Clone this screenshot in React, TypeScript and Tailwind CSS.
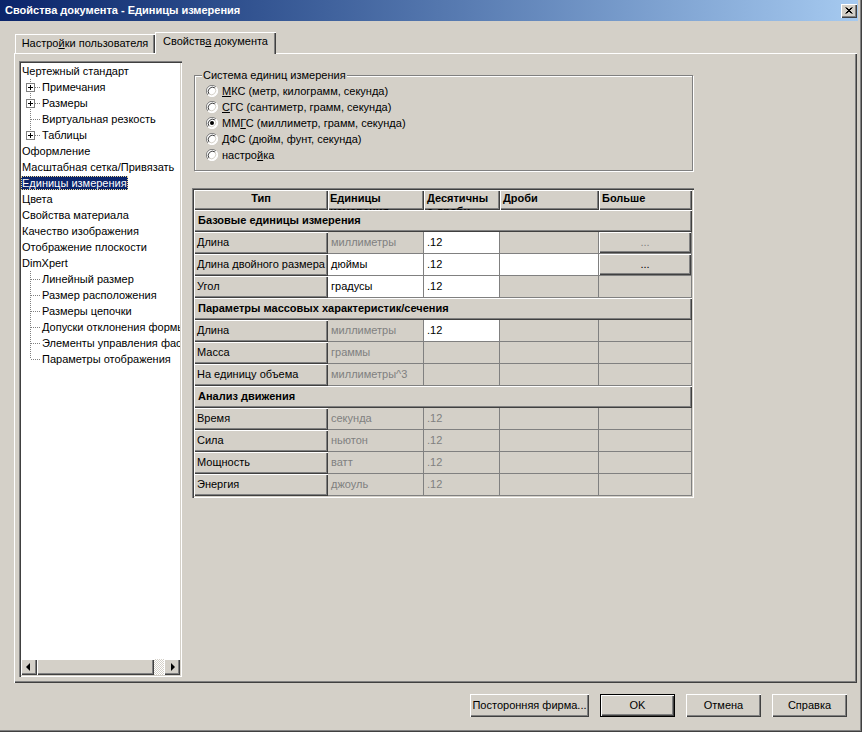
import React from "react";

const raised =
  "bg-[#d4d0c8] shadow-[inset_1px_1px_#ffffff,inset_-1px_-1px_#404040,inset_-2px_-2px_#808080]";
const sunken =
  "shadow-[inset_1px_1px_#808080,inset_2px_2px_#404040,inset_-1px_-1px_#ffffff,inset_-2px_-2px_#d4d0c8]";

type TreeNode = { label: string; level: 0 | 1; box?: boolean; last?: boolean; selected?: boolean };

const tree: TreeNode[] = [
  { label: "Чертежный стандарт", level: 0 },
  { label: "Примечания", level: 1, box: true },
  { label: "Размеры", level: 1, box: true },
  { label: "Виртуальная резкость", level: 1 },
  { label: "Таблицы", level: 1, box: true, last: true },
  { label: "Оформление", level: 0 },
  { label: "Масштабная сетка/Привязать", level: 0 },
  { label: "Единицы измерения", level: 0, selected: true },
  { label: "Цвета", level: 0 },
  { label: "Свойства материала", level: 0 },
  { label: "Качество изображения", level: 0 },
  { label: "Отображение плоскости", level: 0 },
  { label: "DimXpert", level: 0 },
  { label: "Линейный размер", level: 1 },
  { label: "Размер расположения", level: 1 },
  { label: "Размеры цепочки", level: 1 },
  { label: "Допуски отклонения формы", level: 1 },
  { label: "Элементы управления фасками", level: 1 },
  { label: "Параметры отображения", level: 1, last: true },
];

function Conn({ box, last }: { box?: boolean; last?: boolean }) {
  return (
    <svg width="20" height="16" className="shrink-0">
      <line x1="8.5" y1="0" x2="8.5" y2={last ? 8 : 16} stroke="#808080" strokeDasharray="1 1" />
      <line x1={box ? 13 : 9} y1="8.5" x2="19" y2="8.5" stroke="#808080" strokeDasharray="1 1" />
      {box && (
        <>
          <rect x="4.5" y="4.5" width="8" height="8" fill="#ffffff" stroke="#808080" />
          <line x1="6" y1="8.5" x2="11" y2="8.5" stroke="#000000" />
          <line x1="8.5" y1="6" x2="8.5" y2="11" stroke="#000000" />
        </>
      )}
    </svg>
  );
}

function Tree() {
  return (
    <div className={`w-[163px] h-[616px] shrink-0 flex flex-col bg-white p-[2px] ${sunken}`}>
      <div className="flex-1 overflow-hidden">
        {tree.map((n, i) => (
          <div key={i} className="flex h-[16px] items-center whitespace-nowrap">
            {n.level === 1 ? (
              <>
                <span className="w-[1px] shrink-0" />
                <Conn box={n.box} last={n.last} />
                <span>{n.label}</span>
              </>
            ) : n.selected ? (
              <span className="h-[14px] leading-[12px] bg-[#0a246a] text-white border border-dotted border-[#f5db95]">
                {n.label}
              </span>
            ) : (
              <span className="pl-[1px]">{n.label}</span>
            )}
          </div>
        ))}
      </div>
      <div className="flex h-[16px] shrink-0">
        <div className={`w-[16px] h-[16px] flex items-center justify-center ${raised}`}>
          <svg width="16" height="16">
            <polygon points="5,8 9,4 9,12" fill="#000000" />
          </svg>
        </div>
        <div className="flex-1 flex bg-[image:repeating-conic-gradient(#ffffff_0_25%,#d4d0c8_0_50%)] bg-[length:2px_2px]">
          <div className={`w-[117px] h-[16px] ${raised}`} />
        </div>
        <div className={`w-[16px] h-[16px] flex items-center justify-center ${raised}`}>
          <svg width="16" height="16">
            <polygon points="7,4 11,8 7,12" fill="#000000" />
          </svg>
        </div>
      </div>
    </div>
  );
}

function Radio({ checked, children }: { checked?: boolean; children: React.ReactNode }) {
  return (
    <div className="flex h-[16px] items-center">
      <svg width="12" height="12" className="shrink-0">
        <circle cx="6" cy="6" r="5.5" fill="#ffffff" stroke="none" />
        <path d="M2 10 A5.5 5.5 0 0 1 10 2" fill="none" stroke="#808080" strokeWidth="1" />
        <path d="M3 9 A4.3 4.3 0 0 1 9 3" fill="none" stroke="#404040" strokeWidth="1" />
        <path d="M10 2 A5.5 5.5 0 0 1 2 10" fill="none" stroke="#ffffff" strokeWidth="1" />
        <path d="M9 3 A4.3 4.3 0 0 1 3 9" fill="none" stroke="#d4d0c8" strokeWidth="1" />
        {checked && <circle cx="6" cy="6" r="2" fill="#000000" />}
      </svg>
      <span className="ml-[4px] whitespace-nowrap">{children}</span>
    </div>
  );
}

type Cell = { text?: string; white?: boolean; dim?: boolean; button?: "on" | "off" };
type Row = { section: string } | { label: string; cells: Cell[] };

const rows: Row[] = [
  { section: "Базовые единицы измерения" },
  {
    label: "Длина",
    cells: [{ text: "миллиметры", dim: true }, { text: ".12", white: true }, {}, { button: "off" }],
  },
  {
    label: "Длина двойного размера",
    cells: [{ text: "дюймы", white: true }, { text: ".12", white: true }, { white: true }, { button: "on" }],
  },
  { label: "Угол", cells: [{ text: "градусы", white: true }, { text: ".12", white: true }, {}, {}] },
  { section: "Параметры массовых характеристик/сечения" },
  { label: "Длина", cells: [{ text: "миллиметры", dim: true }, { text: ".12", white: true }, {}, {}] },
  { label: "Масса", cells: [{ text: "граммы", dim: true }, {}, {}, {}] },
  { label: "На единицу объема", cells: [{ text: "миллиметры^3", dim: true }, {}, {}, {}] },
  { section: "Анализ движения" },
  { label: "Время", cells: [{ text: "секунда", dim: true }, { text: ".12", dim: true }, {}, {}] },
  { label: "Сила", cells: [{ text: "ньютон", dim: true }, { text: ".12", dim: true }, {}, {}] },
  { label: "Мощность", cells: [{ text: "ватт", dim: true }, { text: ".12", dim: true }, {}, {}] },
  { label: "Энергия", cells: [{ text: "джоуль", dim: true }, { text: ".12", dim: true }, {}, {}] },
];

function DataCell({ c }: { c: Cell }) {
  if (c.button) {
    return (
      <div className="h-[22px] border-r border-b border-[#808080]">
        <div
          className={`h-[21px] w-full flex items-center justify-center ${raised} ${
            c.button === "off" ? "text-[#808080]" : "text-black"
          }`}
        >
          ...
        </div>
      </div>
    );
  }
  return (
    <div
      className={`h-[22px] flex items-center pl-[3px] pb-[1px] border-r border-b border-[#808080] whitespace-nowrap overflow-hidden ${
        c.white ? "bg-white" : "bg-[#d4d0c8]"
      } ${c.dim ? "text-[#808080]" : "text-black"}`}
    >
      {c.text}
    </div>
  );
}

function UnitsTable() {
  return (
    <div className={`w-[502px] p-[2px] ${sunken}`}>
      <div className="grid grid-cols-[134px_96px_76px_99px_93px]">
        <div className={`h-[20px] pt-[2px] font-bold text-center overflow-hidden ${raised}`}>Тип</div>
        <div className={`h-[20px] pt-[2px] pl-[2px] font-bold overflow-hidden ${raised}`}>
          Единицы
          <br />
          измерения
        </div>
        <div className={`h-[20px] pt-[2px] pl-[3px] font-bold overflow-hidden ${raised}`}>
          Десятичны
          <br />е дроби
        </div>
        <div className={`h-[20px] pt-[2px] pl-[3px] font-bold overflow-hidden ${raised}`}>Дроби</div>
        <div className={`h-[20px] pt-[2px] pl-[3px] font-bold overflow-hidden ${raised}`}>Больше</div>
        {rows.map((r, i) =>
          "section" in r ? (
            <div key={i} className={`col-span-5 h-[22px] flex items-center pl-[4px] pb-[1px] font-bold ${raised}`}>
              {r.section}
            </div>
          ) : (
            <React.Fragment key={i}>
              <div className={`h-[22px] flex items-center pl-[3px] pb-[1px] whitespace-nowrap ${raised}`}>
                {r.label}
              </div>
              {r.cells.map((c, j) => (
                <DataCell key={j} c={c} />
              ))}
            </React.Fragment>
          )
        )}
      </div>
    </div>
  );
}

function Btn({ children, w, def }: { children: React.ReactNode; w: string; def?: boolean }) {
  return (
    <div
      className={`${w} h-[23px] flex items-center justify-center bg-[#d4d0c8] ${
        def
          ? "shadow-[inset_0_0_0_1px_#000000,inset_2px_2px_#ffffff,inset_-2px_-2px_#404040,inset_-3px_-3px_#808080]"
          : "shadow-[inset_1px_1px_#ffffff,inset_-1px_-1px_#404040,inset_-2px_-2px_#808080]"
      }`}
    >
      {children}
    </div>
  );
}

export default function App() {
  return (
    <div className="w-[862px] h-[732px] flex flex-col bg-[#d4d0c8] pr-[4px] text-[11px] leading-[13px] text-black font-['Liberation_Sans',Arial,sans-serif] shadow-[inset_-1px_-1px_#404040,inset_-2px_-2px_#808080]">
      {/* title bar */}
      <div className="h-[21px] shrink-0 flex items-center justify-between pl-[5px] pr-[1px] bg-gradient-to-r from-[#0a246a] to-[#a6caf0]">
        <span className="text-white font-bold text-[11px]">Свойства документа - Единицы измерения</span>
        <div className={`w-[16px] h-[14px] flex items-center justify-center ${raised}`}>
          <svg width="16" height="14">
            <path d="M4.5 3.5 L10.5 9.5 M5.5 3.5 L11.5 9.5 M10.5 3.5 L4.5 9.5 M11.5 3.5 L5.5 9.5" stroke="#000000" strokeWidth="1" />
          </svg>
        </div>
      </div>

      <div className="flex flex-col pl-[14px] pr-[1px]">
        {/* tabs */}
        <div className="flex items-end h-[21px] mt-[11px]">
          <div className="w-[1px]" />
          <div className="w-[140px] h-[19px] flex items-center justify-center shadow-[inset_1px_1px_#ffffff,inset_-1px_0_#404040,inset_-2px_0_#808080]">
            <span>
              Настро<u>й</u>ки пользователя
            </span>
          </div>
          <div className="w-[121px] h-[22px] -mb-[1px] relative z-10 bg-[#d4d0c8] flex items-start pt-[3px] justify-center shadow-[inset_1px_1px_#ffffff,inset_-1px_0_#404040,inset_-2px_0_#808080]">
            <span>
              Свойств<u>а</u> документа
            </span>
          </div>
        </div>

        {/* panel */}
        <div className="h-[630px] flex pl-[5px] pt-[8px] shadow-[inset_1px_1px_#ffffff,inset_-1px_-1px_#404040,inset_-2px_-2px_#808080]">
          <Tree />
          <div className="ml-[10px] flex flex-col">
            <fieldset className="ml-[2px] mt-[8px] w-[499px] border border-[#808080] px-0 pb-[7px] shadow-[inset_1px_1px_#ffffff,1px_1px_#ffffff]">
              <legend className="ml-[7px] px-[1px] bg-[#d4d0c8] leading-[13px]">Система единиц измерения</legend>
              <div className="pl-[11px] pt-[1px]">
                <Radio>
                  <u>М</u>КС (метр, килограмм, секунда)
                </Radio>
                <Radio>
                  <u>С</u>ГС (сантиметр, грамм, секунда)
                </Radio>
                <Radio checked>
                  ММ<u>Г</u>С (миллиметр, грамм, секунда)
                </Radio>
                <Radio>
                  <u>Д</u>ФС (дюйм, фунт, секунда)
                </Radio>
                <Radio>
                  настро<u>й</u>ка
                </Radio>
              </div>
            </fieldset>
            <div className="mt-[17px]">
              <UnitsTable />
            </div>
          </div>
        </div>

        {/* buttons */}
        <div className="flex justify-end gap-[11px] mt-[11px] pr-[10px]">
          <Btn w="w-[119px]">Посторонняя фирма...</Btn>
          <Btn w="w-[75px]" def>
            OK
          </Btn>
          <Btn w="w-[75px]">Отмена</Btn>
          <Btn w="w-[75px]">Справка</Btn>
        </div>
      </div>
    </div>
  );
}
